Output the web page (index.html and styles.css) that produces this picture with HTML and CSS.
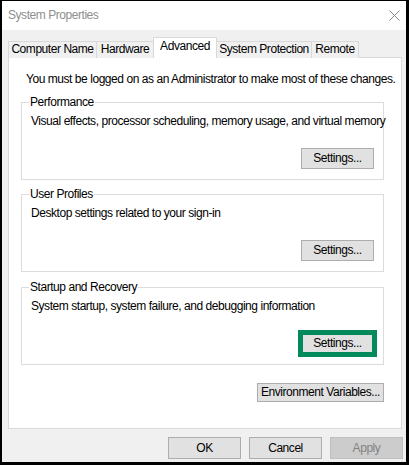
FILE: index.html
```html
<!DOCTYPE html>
<html lang="en">
<head>
<meta charset="utf-8">
<title>System Properties</title>
<link rel="stylesheet" href="styles.css">
</head>
<body>
<div class="window">
  <div class="titlebar">
    <span class="title">System Properties</span>
    <svg class="close" width="11" height="11" viewBox="0 0 11 11" aria-hidden="true">
      <path d="M0.5 0.5 L10.5 10.5 M10.5 0.5 L0.5 10.5" stroke="#8a8a8a" stroke-width="1" fill="none"/>
    </svg>
  </div>
  <div class="content">
    <div class="tabs">
      <div class="tab tab-name">Computer Name</div>
      <div class="tab tab-hw">Hardware</div>
      <div class="tab tab-adv active">Advanced</div>
      <div class="tab tab-sp">System Protection</div>
      <div class="tab tab-remote">Remote</div>
    </div>
    <div class="panel">
      <p class="note">You must be logged on as an Administrator to make most of these changes.</p>
      <fieldset class="group">
        <legend>Performance</legend>
        <p class="desc">Visual effects, processor scheduling, memory usage, and virtual memory</p>
        <div class="group-actions"><button class="btn">Settings...</button></div>
      </fieldset>
      <fieldset class="group">
        <legend>User Profiles</legend>
        <p class="desc">Desktop settings related to your sign-in</p>
        <div class="group-actions"><button class="btn">Settings...</button></div>
      </fieldset>
      <fieldset class="group group-last">
        <legend>Startup and Recovery</legend>
        <p class="desc">System startup, system failure, and debugging information</p>
        <div class="group-actions"><button class="btn focused">Settings...</button></div>
      </fieldset>
      <div class="env-row"><button class="btn btn-env">Environment Variables...</button></div>
    </div>
    <div class="actions">
      <button class="btn btn-dlg">OK</button>
      <button class="btn btn-dlg">Cancel</button>
      <button class="btn btn-dlg disabled" disabled>Apply</button>
    </div>
  </div>
</div>
</body>
</html>
```
FILE: styles.css
```css
* { box-sizing: border-box; }

html, body {
  margin: 0;
  padding: 0;
  background: #000;
}

body {
  font-family: "Liberation Sans", Arial, sans-serif;
  font-size: 12px;
  letter-spacing: -0.45px;
  color: #000;
}

.window {
  width: 404px;
  height: 461px;
  margin: 1px 0 0 2px;
  background: #f0f0f0;
  display: flex;
  flex-direction: column;
}

.titlebar {
  height: 29px;
  background: #fff;
  display: flex;
  align-items: center;
  justify-content: space-between;
  padding: 0 6px 0 6px;
}

.title {
  color: #8e8e8e;
  font-size: 12px;
  line-height: 15px;
}

.close { display: block; }

.content {
  flex: 1;
  padding: 7px 3px 0 6px;
  display: flex;
  flex-direction: column;
}

.tabs {
  display: flex;
  align-items: flex-end;
  height: 21px;
  position: relative;
  z-index: 1;
  margin-bottom: -1px;
}

.tab {
  height: 17px;
  border: 1px solid #d9d9d9;
  border-bottom: none;
  background: #f0f0f0;
  text-align: center;
  line-height: 15px;
  white-space: nowrap;
  margin-left: -1px;
}

.tab:first-child { margin-left: 0; }

.tab-name { width: 89px; }
.tab-hw { width: 58px; }
.tab-adv { width: 64px; }
.tab-sp { width: 96px; }
.tab-remote { width: 48px; }

.tab.active {
  height: 21px;
  background: #fff;
  padding-top: 1px;
  position: relative;
  z-index: 2;
}

.panel {
  width: 394px;
  height: 372px;
  background: #fff;
  border: 1px solid #d9d9d9;
  padding: 14px 17px 0 12px;
}

.note {
  margin: 0 0 8px 5px;
  line-height: 15px;
  white-space: nowrap;
}

.group {
  margin: 0;
  min-width: 0;
  border: 1px solid #dcdcdc;
  padding: 4px 9px 10px 9px;
}

.group + .group { margin-top: 7px; }
.group-last { margin-top: 8px !important; }

.group legend {
  padding: 0 1px;
  margin-left: -2px;
  line-height: 15px;
  font-size: 12px;
}

.desc {
  margin: 0;
  line-height: 15px;
  white-space: nowrap;
}

.group-actions {
  display: flex;
  justify-content: flex-end;
  margin-top: 19px;
}

.btn {
  font-family: "Liberation Sans", Arial, sans-serif;
  font-size: 12px;
  letter-spacing: -0.45px;
  color: #000;
  background: #e1e1e1;
  border: 1px solid #adadad;
  width: 73px;
  height: 21px;
  padding: 0;
  margin: 0;
  line-height: 15px;
  white-space: nowrap;
}

.btn.focused {
  outline: 5px solid #028a5c;
  outline-offset: -2px;
}

.env-row {
  display: flex;
  justify-content: flex-end;
  margin-top: 18px;
}

.btn-env {
  width: 127px;
  height: 19px;
}

.actions {
  display: flex;
  justify-content: flex-end;
  gap: 8px;
  margin-top: 8px;
}

.btn-dlg { height: 22px; }

.btn.disabled {
  background: #cccccc;
  border-color: #bfbfbf;
  color: #838383;
}
```
